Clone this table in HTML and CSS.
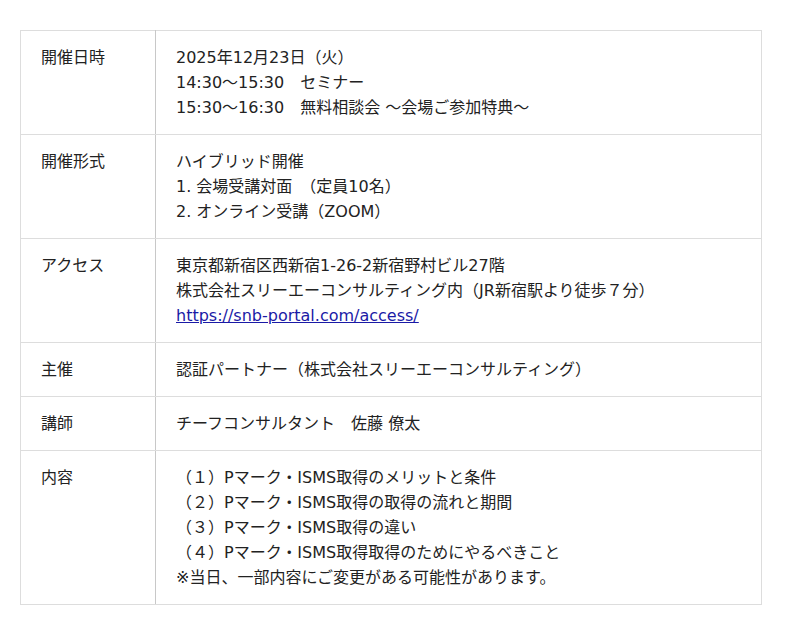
FILE: index.html
```html
<!DOCTYPE html>
<html lang="ja">
<head>
<meta charset="utf-8">
<link rel="stylesheet" href="styles.css">
</head>
<body>
<div class="wrap">
<table class="info">
  <tr>
    <th>開催日時</th>
    <td>2025年12月23日（火）<br>14:30～15:30　セミナー<br>15:30～16:30　無料相談会 ～会場ご参加特典～</td>
  </tr>
  <tr>
    <th>開催形式</th>
    <td>ハイブリッド開催<br>1. 会場受講対面　（定員10名）<br>2. オンライン受講（ZOOM）</td>
  </tr>
  <tr>
    <th>アクセス</th>
    <td>東京都新宿区西新宿1-26-2新宿野村ビル27階<br>株式会社スリーエーコンサルティング内（JR新宿駅より徒歩７分）<br><a href="#">https://snb-portal.com/access/</a></td>
  </tr>
  <tr>
    <th>主催</th>
    <td>認証パートナー（株式会社スリーエーコンサルティング）</td>
  </tr>
  <tr>
    <th>講師</th>
    <td>チーフコンサルタント　佐藤 僚太</td>
  </tr>
  <tr>
    <th>内容</th>
    <td>（１）Pマーク・ISMS取得のメリットと条件<br>（２）Pマーク・ISMS取得の取得の流れと期間<br>（３）Pマーク・ISMS取得の違い<br>（４）Pマーク・ISMS取得取得のためにやるべきこと<br>※当日、一部内容にご変更がある可能性があります。</td>
  </tr>
</table>
</div>
</body>
</html>
```
FILE: styles.css
```css
html, body {
  margin: 0;
  padding: 0;
  background: #fff;
}
.wrap {
  padding: 30px 38px 0 20px;
}
.info {
  width: 742px;
  border-collapse: collapse;
  font-family: "DejaVu Sans", "Noto Sans CJK JP", sans-serif;
  font-size: 16px;
  line-height: 25px;
  color: #222;
}
.info th, .info td {
  border: 1px solid #ddd;
  padding: 14px 20px 14px 20px;
  text-align: left;
  vertical-align: top;
  font-weight: normal;
}
.info th {
  width: 94px;
  border-right-color: #c8c8c8;
}
.info a {
  color: #1a1aa6;
  text-decoration: underline;
}
```
